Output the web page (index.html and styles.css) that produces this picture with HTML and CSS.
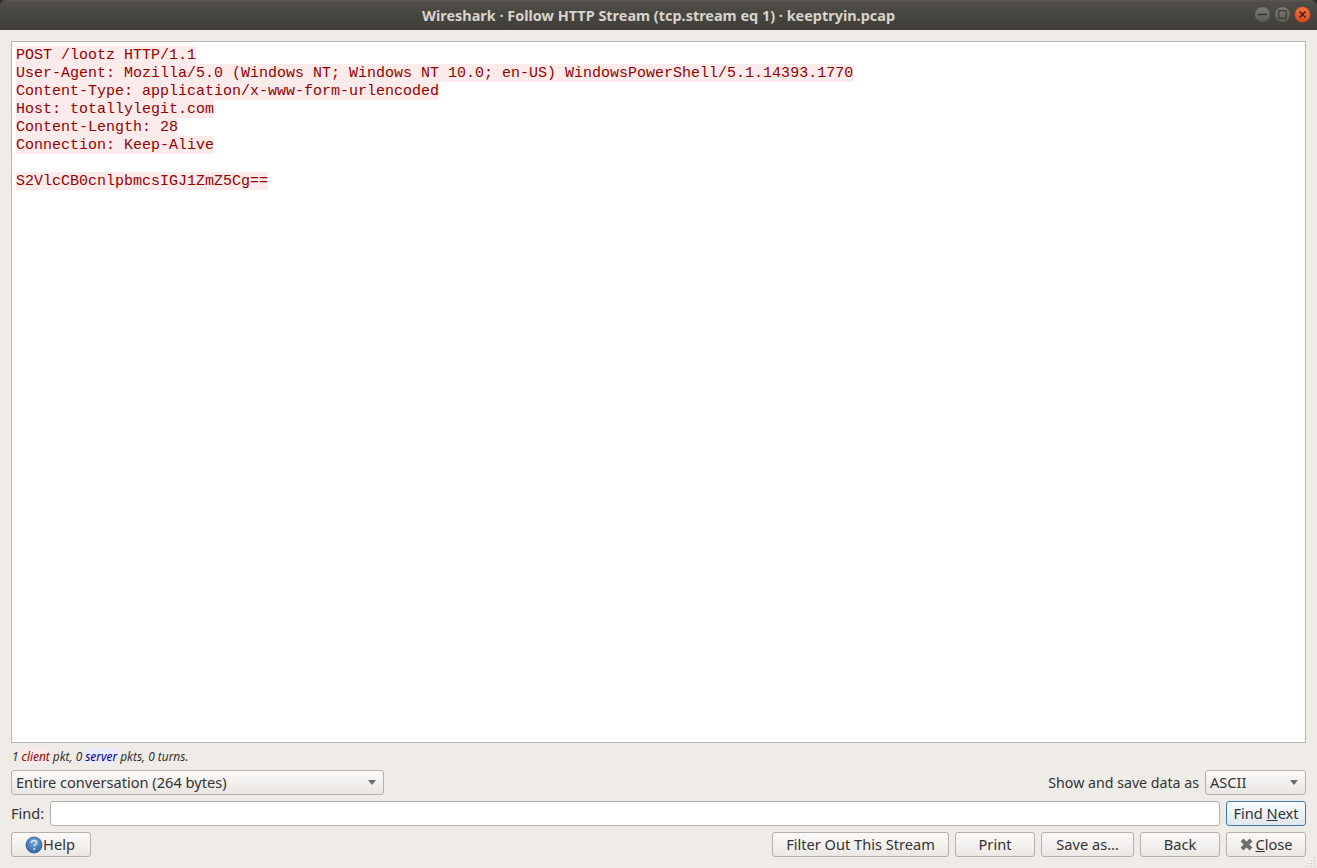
FILE: index.html
```html
<!DOCTYPE html>
<html lang="en">
<head>
<meta charset="utf-8">
<title>Wireshark · Follow HTTP Stream</title>
<link rel="stylesheet" href="styles.css">
</head>
<body>
<div class="window">
  <header class="titlebar">
    <div class="title">Wireshark · Follow HTTP Stream (tcp.stream eq 1) · keeptryin.pcap</div>
    <div class="controls">
      <span class="wbtn"><svg width="12" height="12" viewBox="0 0 12 12"><path d="M0 6h12" stroke="#34332e" stroke-width="1.8"/></svg></span>
      <span class="wbtn"><svg width="12" height="12" viewBox="0 0 12 12"><rect x="1" y="1" width="10" height="10" fill="none" stroke="#34332e" stroke-width="1.4"/></svg></span>
      <span class="wbtn wclose"><svg width="12" height="12" viewBox="0 0 12 12"><path d="M2 2l8 8M10 2l-8 8" stroke="#3c2015" stroke-width="2"/></svg></span>
    </div>
  </header>
  <main class="content">
    <div class="stream">
      <div class="hl">POST /lootz HTTP/1.1</div>
      <div class="hl">User-Agent: Mozilla/5.0 (Windows NT; Windows NT 10.0; en-US) WindowsPowerShell/5.1.14393.1770</div>
      <div class="hl">Content-Type: application/x-www-form-urlencoded</div>
      <div class="hl">Host: totallylegit.com</div>
      <div class="hl">Content-Length: 28</div>
      <div class="hl">Connection: Keep-Alive</div>
      <div class="blank"></div>
      <div class="hl">S2VlcCB0cnlpbmcsIGJ1ZmZ5Cg==</div>
    </div>
    <div class="stats"><span>1</span><span class="client">client</span><span>pkt, 0</span><span class="server">server</span><span>pkts, 0 turns.</span></div>
    <div class="row">
      <div class="combo combo-wide"><span>Entire conversation (264 bytes)</span><i class="caret"></i></div>
      <div class="spacer"></div>
      <span class="label show-label">Show and save data as</span>
      <div class="combo combo-small"><span>ASCII</span><i class="caret"></i></div>
    </div>
    <div class="row">
      <span class="label">Find:</span>
      <div class="input"></div>
      <div class="btn btn-focus btn-std"><span>Find <u>N</u>ext</span></div>
    </div>
    <div class="row buttons">
      <div class="btn btn-std btn-help"><svg class="help" width="18" height="18" viewBox="0 0 18 18"><defs><radialGradient id="hg" cx="50%" cy="30%" r="75%"><stop offset="0" stop-color="#7aa7d8"/><stop offset="1" stop-color="#2a62a5"/></radialGradient></defs><circle cx="9" cy="9" r="8" fill="url(#hg)" stroke="#2c5a92" stroke-width=".8"/><path d="M6.4 7c0-1.6 1.2-2.5 2.7-2.5s2.6.9 2.6 2.2c0 1.9-2.5 1.9-2.5 3.6" fill="none" stroke="#dfe8f2" stroke-width="1.4"/><circle cx="9.2" cy="13" r="1" fill="#dfe8f2"/></svg><span>Help</span></div>
      <div class="spacer"></div>
      <div class="btn btn-filter">Filter Out This Stream</div>
      <div class="btn btn-std">Print</div>
      <div class="btn btn-save">Save as…</div>
      <div class="btn btn-std">Back</div>
      <div class="btn btn-std btn-close"><svg class="x" width="15" height="15" viewBox="0 0 15 15"><path d="M3 3l9 9M12 3l-9 9" stroke="#6f6d68" stroke-width="4"/></svg><span><u>C</u>lose</span></div>
    </div>
    <svg class="grip" width="12" height="12" viewBox="0 0 12 12"><g fill="#c4c0b9"><rect x="9" y="1" width="1" height="1"/><rect x="6" y="4" width="1" height="1"/><rect x="9" y="4" width="1" height="1"/><rect x="3" y="7" width="1" height="1"/><rect x="6" y="7" width="1" height="1"/><rect x="9" y="7" width="1" height="1"/><rect x="0" y="10" width="1" height="1"/><rect x="3" y="10" width="1" height="1"/><rect x="6" y="10" width="1" height="1"/><rect x="9" y="10" width="1" height="1"/></g></svg>
  </main>
</div>
</body>
</html>
```
FILE: styles.css
```css
* { box-sizing: border-box; }
html, body { margin: 0; padding: 0; }
body {
  width: 1317px;
  height: 868px;
  overflow: hidden;
  background: #2f2e2a;
  font-family: "Noto Sans", "Open Sans", sans-serif;
  font-size: 14.6px;
  color: #333;
}
.window { display: flex; flex-direction: column; height: 868px; }
.titlebar {
  position: relative;
  height: 30px;
  flex: none;
  display: flex;
  align-items: center;
  justify-content: center;
  background: linear-gradient(#5a5850 0, #4f4d47 2px, #3e3d38 100%);
  border-radius: 6px 6px 0 0;
}
.title { color: #d8d4cb; font-size: 14.45px; font-weight: 700; white-space: nowrap; }
.controls {
  position: absolute;
  top: 6px;
  right: 6px;
  display: flex;
  gap: 3px;
}
.wbtn {
  width: 17px;
  height: 17px;
  border-radius: 50%;
  background: linear-gradient(#7b7a73, #5b5a53);
  border: 1px solid #45443e;
  display: flex;
  align-items: center;
  justify-content: center;
}
.wbtn svg { width: 9px; height: 9px; }
.wclose { background: linear-gradient(#f0703f, #dc4a1d); border-color: #7c4026; }
.content {
  position: relative;
  flex: 1;
  background: #efebe7;
  padding: 11px 11px 0;
  display: flex;
  flex-direction: column;
}
.stream {
  height: 702px;
  flex: none;
  background: #fff;
  border: 1px solid #b9b6b0;
  padding: 4px 4px;
  font-family: "Liberation Mono", monospace;
  font-size: 15px;
  line-height: 18px;
  color: #960000;
  overflow: hidden;
}
.hl { background: #fcebeb; width: fit-content; height: 18px; padding-top: 1px; white-space: pre; }
.blank { height: 18px; }
.stats {
  height: 27px;
  flex: none;
  display: flex;
  align-items: center;
  gap: 0.25em;
  padding: 0 0 2px 1px;
  font-size: 11.9px;
  font-style: italic;
  color: #333;
}
.client { color: #960000; background: #fcebeb; }
.server { color: #000096; background: #ebebfc; }
.row { display: flex; align-items: center; height: 25px; flex: none; margin-bottom: 6px; gap: 6px; }
.spacer { flex: 1; }
.label { color: #333; white-space: nowrap; padding-bottom: 2px; }
.show-label { font-size: 14.2px; padding-bottom: 1px; }
.combo {
  height: 25px;
  display: flex;
  align-items: center;
  justify-content: space-between;
  padding: 0 7px 2px 4px;
  border: 1px solid #b5b1aa;
  border-radius: 3px;
  background: linear-gradient(#fbfaf9, #e9e6e2);
  color: #333;
}
.combo-wide { width: 373px; }
.combo-small { width: 101px; }
.caret { width: 0; height: 0; margin-top: 2px; border-left: 4px solid transparent; border-right: 4px solid transparent; border-top: 5px solid #6f6d68; }
.input {
  flex: 1;
  height: 25px;
  background: #fff;
  border: 1px solid #b5b1aa;
  border-radius: 3px;
}
.btn {
  height: 25px;
  display: flex;
  align-items: center;
  justify-content: center;
  padding-bottom: 2px;
  border: 1px solid #b5b1aa;
  border-radius: 3px;
  background: linear-gradient(#fbfaf9, #ebe8e4);
  color: #333;
  white-space: nowrap;
}
.btn-std { width: 80px; }
.btn-filter { width: 177px; }
.btn-save { width: 93px; }
.btn-focus { border-color: #3d7aa8; background: linear-gradient(#f9fbfc, #dfe8ee); }
.btn-help { padding-right: 2px; }
.btn-help svg { margin-top: 2px; }
.btn-close { gap: 1px; }
.btn-close svg { margin-top: 2px; }
.grip { position: absolute; right: 0; bottom: 0; }
```
